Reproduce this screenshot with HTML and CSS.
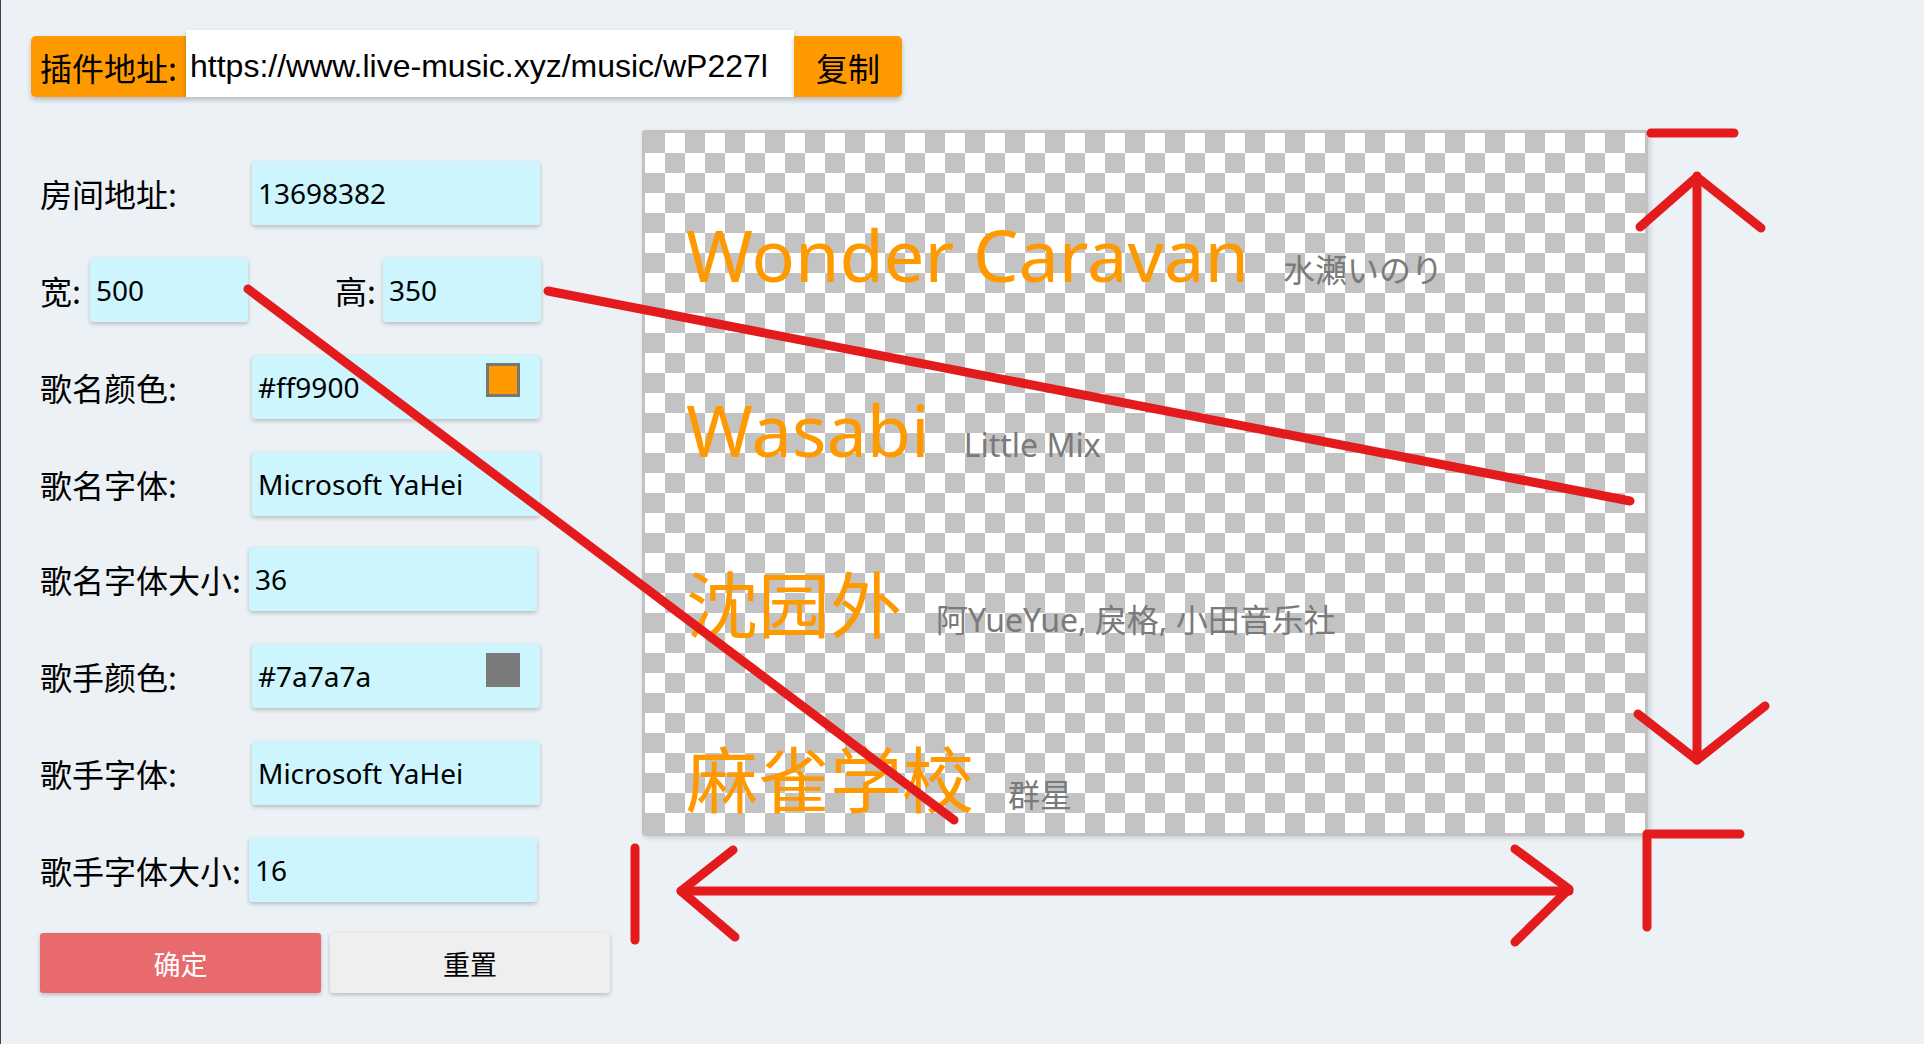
FILE: index.html
```html
<!DOCTYPE html>
<html lang="zh-CN">
<head>
<meta charset="utf-8">
<title>插件设置</title>
<link rel="stylesheet" href="styles.css">
</head>
<body>
<div class="page">
  <div class="plugin-bar">
    <span class="pb-label">插件地址:</span>
    <input class="pb-input" type="text" value="https://www.live-music.xyz/music/wP227l" readonly>
    <button class="pb-copy" type="button">复制</button>
  </div>

  <div class="main">
    <form class="form">
      <div class="row">
        <label class="label">房间地址:</label>
        <div class="field"><input class="input" type="text" value="13698382"></div>
      </div>
      <div class="row">
        <label class="label label-w">宽:</label>
        <div class="field field-sm"><input class="input" type="text" value="500"></div>
        <label class="label label-h">高:</label>
        <div class="field field-sm"><input class="input" type="text" value="350"></div>
      </div>
      <div class="row">
        <label class="label">歌名颜色:</label>
        <div class="field"><input class="input" type="text" value="#ff9900"><span class="swatch swatch-orange"></span></div>
      </div>
      <div class="row">
        <label class="label">歌名字体:</label>
        <div class="field"><input class="input" type="text" value="Microsoft YaHei"></div>
      </div>
      <div class="row row-tight">
        <label class="label label-long">歌名字体大小:</label>
        <div class="field"><input class="input" type="text" value="36"></div>
      </div>
      <div class="row">
        <label class="label">歌手颜色:</label>
        <div class="field"><input class="input" type="text" value="#7a7a7a"><span class="swatch swatch-gray"></span></div>
      </div>
      <div class="row">
        <label class="label">歌手字体:</label>
        <div class="field"><input class="input" type="text" value="Microsoft YaHei"></div>
      </div>
      <div class="row">
        <label class="label label-long">歌手字体大小:</label>
        <div class="field"><input class="input" type="text" value="16"></div>
      </div>
      <div class="actions">
        <button class="btn btn-ok" type="button">确定</button>
        <button class="btn btn-reset" type="button">重置</button>
      </div>
    </form>

    <div class="preview">
      <div class="song-row"><span class="song">Wonder Caravan</span><span class="singer">水瀬いのり</span></div>
      <div class="song-row"><span class="song">Wasabi</span><span class="singer">Little Mix</span></div>
      <div class="song-row"><span class="song">沈园外</span><span class="singer">阿YueYue, 戾格, 小田音乐社</span></div>
      <div class="song-row"><span class="song">麻雀学校</span><span class="singer">群星</span></div>
    </div>
  </div>
</div>

<svg class="annot" width="1924" height="1044" viewBox="0 0 1924 1044" xmlns="http://www.w3.org/2000/svg">
  <g fill="none" stroke="#e41b1c" stroke-width="9" stroke-linecap="round" stroke-linejoin="round">
    <line x1="248" y1="289" x2="954" y2="820"/>
    <line x1="548" y1="291" x2="1630" y2="501"/>
    <line x1="1651" y1="133" x2="1734" y2="133"/>
    <line x1="1697" y1="176" x2="1697" y2="760"/>
    <polyline points="1640,227 1697,177 1761,228"/>
    <polyline points="1638,714 1697,760 1765,706"/>
    <polyline points="1647,927 1647,834 1740,834"/>
    <line x1="635" y1="848" x2="635" y2="940"/>
    <line x1="681" y1="891" x2="1569" y2="891"/>
    <polyline points="733,850 681,891 735,937"/>
    <polyline points="1515,849 1569,889 1515,942"/>
  </g>
</svg>
</body>
</html>
```

FILE: styles.css
```css
* {
  box-sizing: border-box;
}

html,
body {
  margin: 0;
  padding: 0;
}

body {
  position: relative;
  width: 1924px;
  height: 1044px;
  overflow: hidden;
  background: #ecf1f6;
  box-shadow: inset 1px 0 0 #3a414d;
  font-family: "Noto Sans CJK SC", "Noto Sans", sans-serif;
  color: #000;
}

.page {
  padding: 30px 0 0 31px;
}

/* plugin address bar */
.plugin-bar {
  display: inline-flex;
  align-items: flex-end;
  height: 67px;
}

.pb-label {
  display: flex;
  align-items: center;
  width: 155px;
  height: 61px;
  padding-left: 9px;
  background: #ff9900;
  border-radius: 5px 0 0 5px;
  font-size: 32px;
  white-space: nowrap;
  box-shadow: 0 3px 5px rgba(0, 0, 0, 0.22);
}

.pb-input {
  width: 608px;
  height: 67px;
  margin: 0;
  padding: 5px 4px 0;
  border: 0;
  outline: none;
  background: #fff;
  color: #000;
  font-family: "Liberation Sans", Arial, sans-serif;
  font-size: 32px;
  box-shadow: 0 3px 5px rgba(0, 0, 0, 0.22);
}

.pb-copy {
  width: 108px;
  height: 61px;
  margin: 0;
  padding: 0;
  border: 0;
  background: #ff9900;
  border-radius: 0 5px 5px 0;
  color: #000;
  font-family: "Noto Sans CJK SC", sans-serif;
  font-size: 32px;
  box-shadow: 0 3px 5px rgba(0, 0, 0, 0.22);
}

/* main area */
.main {
  display: flex;
  margin-top: 33px;
}

.form {
  display: flex;
  flex-direction: column;
  gap: 33px;
  width: 579px;
  margin: 0;
  padding: 31px 0 0 9px;
}

.row {
  display: flex;
  align-items: center;
  height: 64px;
}

.row-tight {
  margin-top: -2px;
}

.label {
  flex-shrink: 0;
  width: 212px;
  font-size: 32px;
  white-space: nowrap;
}

.label-long {
  width: 209px;
}

.label-w {
  width: 50px;
}

.label-h {
  width: 48px;
  margin-left: 87px;
}

.field {
  position: relative;
  width: 288px;
  height: 64px;
}

.field-sm {
  width: 158px;
}

.input {
  width: 100%;
  height: 100%;
  margin: 0;
  padding: 0 6px;
  border: 0;
  outline: none;
  border-radius: 3px;
  background: #cdf5fd;
  color: #000;
  font-family: "Noto Sans", "Noto Sans CJK SC", sans-serif;
  font-size: 28px;
  box-shadow: 0 2px 4px rgba(0, 0, 0, 0.22);
}

.swatch {
  position: absolute;
  right: 20px;
  width: 34px;
  height: 34px;
}

.swatch-orange {
  top: 8px;
  background: #ff9900;
  border: 3px solid #767676;
}

.swatch-gray {
  top: 9px;
  background: #7a7a7a;
}

.actions {
  display: flex;
  gap: 9px;
  margin-top: -2px;
}

.btn {
  width: 281px;
  height: 60px;
  margin: 0;
  padding: 0;
  border: 0;
  border-radius: 3px;
  font-family: "Noto Sans CJK SC", sans-serif;
  font-size: 27px;
  box-shadow: 0 2px 4px rgba(0, 0, 0, 0.22);
}

.btn-ok {
  background: #e96a6d;
  color: #fff;
}

.btn-reset {
  width: 280px;
  background: #efefef;
  color: #000;
}

/* preview canvas */
.preview {
  display: flex;
  flex-direction: column;
  width: 1006px;
  height: 706px;
  margin-left: 32px;
  padding-left: 41px;
  border: 3px solid #c2c2c2;
  border-radius: 3px;
  background: repeating-conic-gradient(#ffffff 0 25%, #c3c3c3 0 50%) 0 0 / 40px 40px;
  box-shadow: 2px 2px 5px rgba(0, 0, 0, 0.15);
  font-family: "Noto Sans", "Noto Sans CJK SC", sans-serif;
}

.song-row {
  display: flex;
  align-items: baseline;
  height: 175px;
  padding-top: 85px;
  white-space: nowrap;
}

.song {
  font-size: 72px;
  line-height: 1;
  color: #ff9900;
}

.singer {
  margin-left: 34px;
  font-size: 32px;
  line-height: 1;
  color: #7a7a7a;
}

/* hand-drawn annotation layer */
.annot {
  position: absolute;
  left: 0;
  top: 0;
  pointer-events: none;
}
```
